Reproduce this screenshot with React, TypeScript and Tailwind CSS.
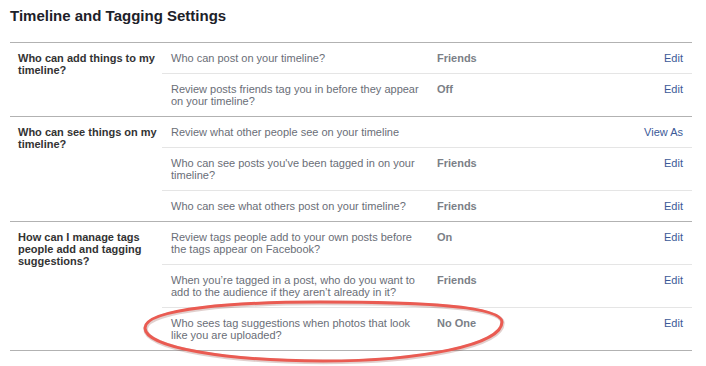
import React from "react";

type Row = { q: React.ReactNode; v?: string; a: string };
type Section = { label: React.ReactNode; rows: Row[] };

const sections: Section[] = [
  {
    label: (
      <>
        Who can add things to my
        <br />
        timeline?
      </>
    ),
    rows: [
      { q: "Who can post on your timeline?", v: "Friends", a: "Edit" },
      {
        q: (
          <>
            Review posts friends tag you in before they appear
            <br />
            on your timeline?
          </>
        ),
        v: "Off",
        a: "Edit",
      },
    ],
  },
  {
    label: (
      <>
        Who can see things on my
        <br />
        timeline?
      </>
    ),
    rows: [
      { q: "Review what other people see on your timeline", a: "View As" },
      {
        q: (
          <>
            Who can see posts you've been tagged in on your
            <br />
            timeline?
          </>
        ),
        v: "Friends",
        a: "Edit",
      },
      { q: "Who can see what others post on your timeline?", v: "Friends", a: "Edit" },
    ],
  },
  {
    label: (
      <>
        How can I manage tags
        <br />
        people add and tagging
        <br />
        suggestions?
      </>
    ),
    rows: [
      {
        q: (
          <>
            Review tags people add to your own posts before
            <br />
            the tags appear on Facebook?
          </>
        ),
        v: "On",
        a: "Edit",
      },
      {
        q: (
          <>
            When you’re tagged in a post, who do you want to
            <br />
            add to the audience if they aren’t already in it?
          </>
        ),
        v: "Friends",
        a: "Edit",
      },
      {
        q: (
          <>
            Who sees tag suggestions when photos that look
            <br />
            like you are uploaded?
          </>
        ),
        v: "No One",
        a: "Edit",
      },
    ],
  },
];

const RING =
  "M145,328 C145,308 240,302 320,302 C420,302 502,306 502,322 C502,345 420,361 323,361 C230,361 145,348 145,328 Z";

export default function App() {
  return (
    <div
      className="relative w-[706px] h-[366px] bg-white overflow-hidden"
      style={{ fontFamily: '"Liberation Sans", Arial, sans-serif' }}
    >
      <div className="pl-[10px] pr-[14px] pt-[6px]">
        <h1 className="text-[15px] font-bold text-[#1d2129] leading-[20px] h-[36px]">
          Timeline and Tagging Settings
        </h1>
        <div className="border-t border-[#b2b2b2]">
          {sections.map((s, i) => (
            <div key={i} className="flex border-b border-[#b2b2b2]">
              <div className="w-[152px] shrink-0 pl-[8px] pt-[9px] text-[11px] leading-[12px] font-bold text-[#333333]">
                {s.label}
              </div>
              <div className="flex-1">
                {s.rows.map((r, j) => (
                  <div
                    key={j}
                    className={`flex py-[9px] text-[11px] leading-[12px] ${
                      j < s.rows.length - 1 ? "border-b border-[#e5e5e5]" : ""
                    }`}
                  >
                    <div className="w-[275px] shrink-0 pl-[9px] text-[#6a6e77]">{r.q}</div>
                    <div className="flex-1 font-bold text-[#7b7f87]">{r.v}</div>
                    <div className="pr-[9px] text-[#3b5998]">{r.a}</div>
                  </div>
                ))}
              </div>
            </div>
          ))}
        </div>
      </div>
      <svg
        className="absolute left-0 top-0 pointer-events-none"
        width="706"
        height="366"
        viewBox="0 0 706 366"
      >
        <path
          d={RING}
          transform="translate(0.5 1)"
          fill="none"
          stroke="rgba(120,40,30,0.22)"
          strokeWidth="4.5"
        />
        <path d={RING} fill="none" stroke="#ea5b52" strokeWidth="3" />
      </svg>
    </div>
  );
}
